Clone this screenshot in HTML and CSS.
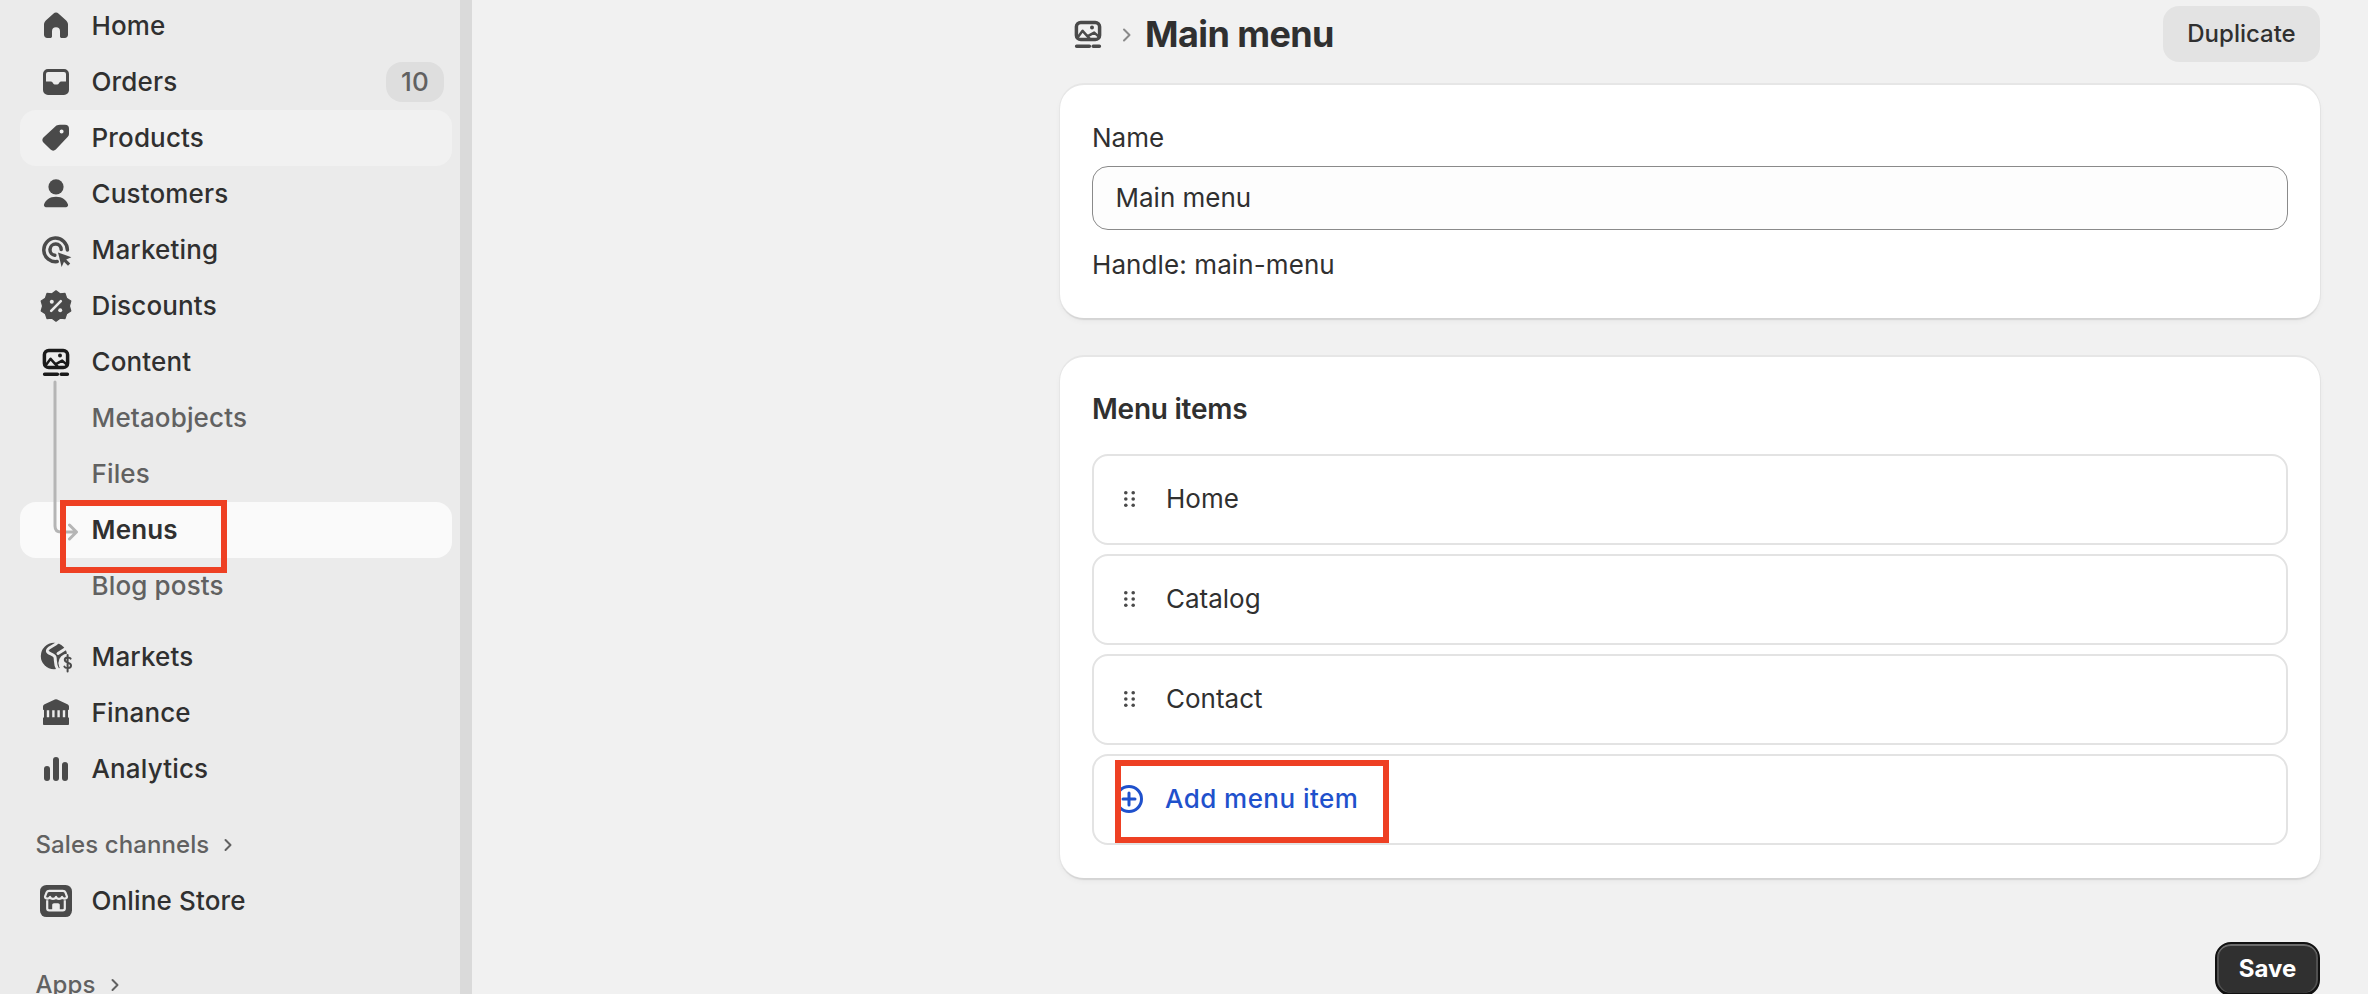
FILE: index.html
```html
<!DOCTYPE html>
<html lang="en">
<head>
<meta charset="utf-8">
<title>Main menu</title>
<link rel="stylesheet" href="styles.css">
</head>
<body>
<div class="app">
  <aside class="sidebar">
    <nav class="nav">
      <a class="nav-item"><svg class="icon" viewBox="0 0 20 20"><path d="M10 3.3c-.5 0-.9.2-1.2.5L4.900 7.200C4.300 7.800 4 8.500 4 9.300V14.400c0 .9.7 1.600 1.600 1.600h1.600c.4 0 .8-.4.8-.8V12.600a2 2 0 0 1 4 0v2.600c0 .4.4.8.8.8h1.600c.9 0 1.600-.7 1.600-1.600V9.300c0-.8-.3-1.500-.9-2.100l-3.900-3.400c-.3-.3-.7-.5-1.200-.5z"/></svg><span>Home</span></a>
      <a class="nav-item"><svg class="icon" viewBox="0 0 20 20"><path fill-rule="evenodd" d="M6 3.500h8A2.500 2.500 0 0 1 16.500 6v8a2.500 2.500 0 0 1-2.500 2.500H6A2.500 2.500 0 0 1 3.500 14V6A2.500 2.500 0 0 1 6 3.500zM5 9.700V6a1 1 0 0 1 1-1h8a1 1 0 0 1 1 1v3.700h-2.400c-.4 0-.7.2-.9.5l-.3.5c-.2.3-.5.5-.8.5H9.400c-.3 0-.6-.2-.8-.5l-.3-.5c-.2-.3-.5-.5-.9-.5z"/></svg><span>Orders</span><em class="badge">10</em></a>
      <a class="nav-item nav-hover"><svg class="icon" viewBox="0 0 20 20"><path fill-rule="evenodd" d="M12 3.400h2.500a2 2 0 0 1 2 2V8c0 .5-.2 1-.6 1.400l-6 6.400c-.7.7-1.900.7-2.600 0l-3.600-3.600c-.7-.7-.7-1.800 0-2.500l6.500-5.900C10.900 3.500 11.400 3.400 12 3.400zM12.800 5.800a1 1 0 1 0 0 2 1 1 0 0 0 0-2z"/></svg><span>Products</span></a>
      <a class="nav-item"><svg class="icon" viewBox="0 0 20 20"><circle cx="10" cy="6.400" r="3.800"/><path d="M10 11.400c-3.200 0-5.300 1.700-6 3.900-.2.7.3 1.300 1 1.300h10c.7 0 1.200-.6 1-1.300-.7-2.200-2.800-3.900-6-3.900z"/></svg><span>Customers</span></a>
      <a class="nav-item"><svg class="icon" viewBox="0 0 20 20"><path class="stroke wide" d="M10.600 15.800A5.900 5.900 0 1 1 15.700 10"/><path class="stroke wide" d="M9.400 12.600a2.800 2.800 0 1 1 3.200-2.800"/><path d="M11 11.200l6.700 2.400-2.600 1.200 2 2-1.100 1.100-2-2-1.200 2.600z"/></svg><span>Marketing</span></a>
      <a class="nav-item"><svg class="icon" viewBox="0 0 20 20"><path d="M10 2.400l2 1.500 2.500-.2.8 2.400 2.100 1.400-.7 2.500.7 2.500-2.100 1.400-.8 2.400-2.500-.2-2 1.500-2-1.500-2.500.2-.8-2.400-2.100-1.400.7-2.500-.7-2.500 2.100-1.400.8-2.400 2.500.2z" stroke="#4a4a4a" stroke-width=".6" stroke-linejoin="round"/><circle class="cut" cx="7.900" cy="7.900" r="1"/><circle class="cut" cx="12.100" cy="12.100" r="1"/><path class="cut-line" d="M7.600 12.400l4.800-4.800"/></svg><span>Discounts</span></a>
      <a class="nav-item nav-current"><svg class="icon icon-dark" viewBox="0 0 20 20"><rect class="stroke wide" x="4.200" y="4.200" width="11.600" height="8.600" rx="2.200"/><path class="stroke peak" d="M4.800 11.700L7.300 8.400l3.600 4M9.900 11.100l3.200-1.800 2.300 2"/><circle cx="12" cy="6.800" r="1"/><path class="stroke wide" d="M4.300 16.100h6.400M12.600 16.100h3.100"/></svg><span>Content</span></a>
      <div class="sub">
        <svg class="rail" viewBox="0 0 30 165" width="30" height="165"><path d="M5 2v144q0 6 6 6h15M19.500 145l7 7-7 7"/></svg>
        <a class="nav-item sub-item">Metaobjects</a>
        <a class="nav-item sub-item">Files</a>
        <a class="nav-item sub-item sub-active">Menus</a>
        <a class="nav-item sub-item">Blog posts</a>
      </div>
      <a class="nav-item group-gap"><svg class="icon" viewBox="0 0 20 20"><circle cx="9" cy="9.500" r="6.600"/><path class="cut-wide" d="M11.200 2.300C8.800 5.300 5.500 4.800 5.700 7c.2 1.600 3.300 1.200 3.800 3.100.4 1.800-.2 3.400 1.300 5.900"/><circle class="cut" cx="16" cy="13" r="4.800"/><path class="cut-wide" d="M11 8.200l5.500-3.500"/><path class="stroke dollar" d="M17.300 10.800c-.4-.7-2.900-1-2.900.6 0 1.700 3.100 1.100 3.100 2.800s-2.800 1.600-3.300.6M15.800 9v8.300"/></svg><span>Markets</span></a>
      <a class="nav-item"><svg class="icon" viewBox="0 0 20 20"><path fill-rule="evenodd" d="M9.400 3.200a1.500 1.500 0 0 1 1.200 0l5.100 2.400c.5.2.8.7.8 1.200V8c0 .3-.2.5-.5.5H16v3.800h.3c.1 0 .2.100.2.200v3c0 .3-.3.500-.5.500H4c-.2 0-.5-.2-.5-.5v-3c0-.1.100-.2.200-.2H4V8.500C3.700 8.500 3.500 8.300 3.500 8V6.800c0-.5.300-1 .8-1.200zM5.400 8.600v3.500h1.200V8.600zM8.100 8.600v3.500h1.200V8.600zM10.700 8.600v3.500h1.200V8.600zM13.400 8.600v3.500h1.200V8.600z"/></svg><span>Finance</span></a>
      <a class="nav-item"><svg class="icon" viewBox="0 0 20 20"><rect x="4" y="8.500" width="3" height="7.500" rx="1.500"/><rect x="8.500" y="4" width="3" height="12" rx="1.500"/><rect x="13" y="6.500" width="3" height="9.500" rx="1.500"/></svg><span>Analytics</span></a>
      <div class="section-title channels-title"><span>Sales channels</span><svg class="chev" viewBox="0 0 10 14"><path d="M2.500 2l5 5-5 5"/></svg></div>
      <a class="nav-item store-row"><svg class="icon" viewBox="0 0 20 20"><rect x="2" y="2" width="16" height="16" rx="3.200"/><path class="store" d="M6.600 4.900h6.800c.6 0 1.100.3 1.300.8l.8 2.100c0 1.200-1.900 1.500-2.500.2-.5 1.300-2.500 1.300-3 0-.5 1.300-2.500 1.300-3 0-.6 1.300-2.500 1-2.500-.2l.8-2.100c.2-.5.7-.8 1.300-.8z"/><path class="store" d="M5.600 9.600v4.200c0 .6.400.900 1 .900h6.800c.6 0 1-.3 1-.9V9.600"/><path class="store-fill" d="M8.100 14.700v-2.700c0-.5.400-.9.900-.9h2c.5 0 .9.400.9.900v2.700z"/></svg><span>Online Store</span></a>
      <div class="section-title apps-title"><span>Apps</span><svg class="chev" viewBox="0 0 10 14"><path d="M2.500 2l5 5-5 5"/></svg></div>
    </nav>
  </aside>
  <main class="main">
    <header class="page-head">
      <div class="crumbs">
        <svg class="icon icon-crumb" viewBox="0 0 20 20"><rect class="stroke wide" x="4.200" y="4.200" width="11.600" height="8.600" rx="2.200"/><path class="stroke peak" d="M4.800 11.700L7.300 8.400l3.600 4M9.900 11.100l3.200-1.800 2.300 2"/><circle cx="12" cy="6.800" r="1"/><path class="stroke wide" d="M4.300 16.100h6.400M12.600 16.100h3.100"/></svg>
        <svg class="crumb-chev" viewBox="0 0 10 16"><path d="M2 2.500l5.500 5.500L2 13.500"/></svg>
        <h1>Main menu</h1>
      </div>
      <button class="btn-secondary">Duplicate</button>
    </header>
    <section class="card name-card">
      <div class="field-label">Name</div>
      <div class="text-input">Main menu</div>
      <div class="handle">Handle: main-menu</div>
    </section>
    <section class="card items-card">
      <h2>Menu items</h2>
      <div class="rows">
        <div class="row"><svg class="drag" viewBox="0 0 11 16"><circle cx="1.800" cy="1.800" r="1.800"/><circle cx="9.200" cy="1.800" r="1.800"/><circle cx="1.800" cy="8" r="1.800"/><circle cx="9.200" cy="8" r="1.800"/><circle cx="1.800" cy="14.200" r="1.800"/><circle cx="9.200" cy="14.200" r="1.800"/></svg><span>Home</span></div>
        <div class="row"><svg class="drag" viewBox="0 0 11 16"><circle cx="1.800" cy="1.800" r="1.800"/><circle cx="9.200" cy="1.800" r="1.800"/><circle cx="1.800" cy="8" r="1.800"/><circle cx="9.200" cy="8" r="1.800"/><circle cx="1.800" cy="14.200" r="1.800"/><circle cx="9.200" cy="14.200" r="1.800"/></svg><span>Catalog</span></div>
        <div class="row"><svg class="drag" viewBox="0 0 11 16"><circle cx="1.800" cy="1.800" r="1.800"/><circle cx="9.200" cy="1.800" r="1.800"/><circle cx="1.800" cy="8" r="1.800"/><circle cx="9.200" cy="8" r="1.800"/><circle cx="1.800" cy="14.200" r="1.800"/><circle cx="9.200" cy="14.200" r="1.800"/></svg><span>Contact</span></div>
        <div class="row row-add"><svg class="plus" viewBox="0 0 28 28"><circle cx="14" cy="14" r="12.500"/><path d="M14 8v12M8 14h12"/></svg><span>Add menu item</span></div>
      </div>
    </section>
    <div class="page-actions"><button class="btn-primary">Save</button></div>
  </main>
</div>
<div class="callout callout-menus"></div>
<div class="callout callout-add"></div>
</body>
</html>
```
FILE: styles.css
```css
* { box-sizing: border-box; }
html, body { margin: 0; padding: 0; }
body {
  position: relative;
  width: 2368px;
  height: 994px;
  overflow: hidden;
  background: #f1f1f1;
  color: #303030;
  font-family: Inter, "Liberation Sans", sans-serif;
  font-size: 26px;
  line-height: 36px;
}
.app { display: flex; height: 994px; overflow: hidden; }

.sidebar {
  flex: 0 0 472px;
  background: #ebebeb;
  border-right: 12px solid #dadada;
  overflow: hidden;
}
.nav { margin-top: -2px; display: flex; flex-direction: column; }
.nav-item {
  display: flex;
  align-items: center;
  height: 56px;
  margin: 0 8px 0 20px;
  padding-left: 16px;
  border-radius: 16px;
  font-weight: 500;
  color: #303030;
  letter-spacing: .15px;
}
.nav-item > span { margin-left: 15.5px; }
.icon { flex: none; width: 40px; height: 40px; fill: #4a4a4a; }
.icon-dark { fill: #1a1a1a; }
.icon-dark .stroke { stroke: #1a1a1a; }
.stroke { fill: none; stroke: #4a4a4a; stroke-width: 1.6; stroke-linecap: round; stroke-linejoin: round; }
.wide { stroke-width: 1.75; }
.peak { stroke-width: 1.25; }
.dollar { stroke-width: 1; }
.cut { fill: #ebebeb; }
.cut-line { fill: none; stroke: #ebebeb; stroke-width: 1.3; stroke-linecap: round; }
.cut-wide { fill: none; stroke: #ebebeb; stroke-width: 1.5; stroke-linecap: round; }
.store { fill: none; stroke: #ebebeb; stroke-width: 1.1; stroke-linejoin: round; }
.store-fill { fill: #ebebeb; }
.nav-hover { background: #f1f1f1; }
.badge {
  margin-left: auto;
  margin-right: 8px;
  width: 58px;
  height: 40px;
  border-radius: 16px;
  background: #dedede;
  color: #616161;
  font-style: normal;
  font-weight: 450;
  line-height: 40px;
  text-align: center;
}
.sub { position: relative; }
.sub-item { padding-left: 71.5px; color: #616161; }
.sub-active { background: #fafafa; color: #303030; font-weight: 600; }
.rail {
  position: absolute;
  left: 50px;
  top: -10px;
  z-index: 1;
  fill: none;
  stroke: #b5b5b5;
  stroke-width: 3;
  stroke-linecap: round;
  stroke-linejoin: round;
}
.group-gap { margin-top: 15px; }
.section-title {
  display: flex;
  align-items: center;
  gap: 14px;
  height: 40px;
  padding-left: 35.5px;
  font-size: 24px;
  font-weight: 500;
  color: #616161;
  letter-spacing: .1px;
}
.chev { width: 10px; height: 14px; fill: none; stroke: #616161; stroke-width: 2; stroke-linecap: round; stroke-linejoin: round; }
.channels-title { margin-top: 28px; }
.store-row { margin-top: 8px; }
.apps-title { margin-top: 36px; }

.main { flex: 1; min-width: 0; padding: 6px 48px 0 588px; }
.page-head { display: flex; align-items: center; justify-content: space-between; height: 56px; margin-bottom: 23px; }
.crumbs { display: flex; align-items: center; margin-left: 8px; }
.crumb-chev { width: 10px; height: 16px; margin-left: 14px; margin-top: 2px; fill: none; stroke: #8a8a8a; stroke-width: 2; stroke-linecap: round; stroke-linejoin: round; }
h1 { margin: 0 0 0 13px; font-size: 36px; line-height: 44px; font-weight: 650; letter-spacing: -.6px; color: #303030; }
button { font-family: inherit; font-size: 24px; line-height: 36px; border: 0; cursor: pointer; }
.btn-secondary {
  height: 56px;
  width: 157px;
  padding: 0;
  border-radius: 16px;
  background: #e3e3e3;
  color: #303030;
  font-weight: 550;
}
.card {
  background: #fff;
  border-radius: 24px;
  box-shadow: 0 -2px 0 #e6e6e6, 1px 0 0 #e3e3e3, -1px 0 0 #e6e6e6, 0 2px 1px #d4d4d4, 0 3px 6px rgba(0,0,0,.04);
}
.name-card { height: 233px; padding: 35px 32px; margin-bottom: 39px; }
.field-label { height: 36px; }
.text-input {
  height: 64px;
  margin-top: 10px;
  padding: 0 22.5px;
  border: 1.5px solid #8a8a8a;
  border-radius: 16px;
  background: #fdfdfd;
  line-height: 61px;
}
.handle { margin-top: 17px; letter-spacing: .1px; }
.items-card { height: 521px; padding: 35px 32px 32px; }
h2 { margin: 0 0 26px; font-size: 28px; line-height: 34px; padding-bottom: 2px; font-weight: 600; letter-spacing: -.25px; }
.rows { display: flex; flex-direction: column; gap: 9px; }
.row {
  display: flex;
  align-items: center;
  height: 91px;
  padding: 0 0 1px 30px;
  border: 2px solid #e3e3e3;
  border-radius: 16px;
}
.row span { margin-left: 31px; }
.drag { width: 11px; height: 16px; fill: #4a4a4a; flex: none; }
.row-add { color: #1f51cc; font-weight: 550; letter-spacing: .45px; padding-left: 21px; }
.row-add span { margin-left: 22px; }
.plus { width: 28px; height: 28px; flex: none; fill: none; stroke: #1f51cc; stroke-width: 3; stroke-linecap: round; }
.page-actions { display: flex; justify-content: flex-end; margin-top: 64px; }
.btn-primary {
  width: 105px;
  height: 54px;
  padding: 0;
  border: 2px solid #111;
  border-bottom-width: 3px;
  border-radius: 16px;
  background: #303030;
  color: #fff;
  font-weight: 650;
  box-shadow: inset 0 2px 0 #6b6b6b, inset 2px 0 0 #505050, inset -2px 0 0 #505050;
}
.callout {
  position: absolute;
  border: 6px solid #ee4023;
  z-index: 5;
}
.callout-menus { left: 60px; top: 500px; width: 167px; height: 73px; }
.callout-add { left: 1115px; top: 760px; width: 274px; height: 83px; }
```
